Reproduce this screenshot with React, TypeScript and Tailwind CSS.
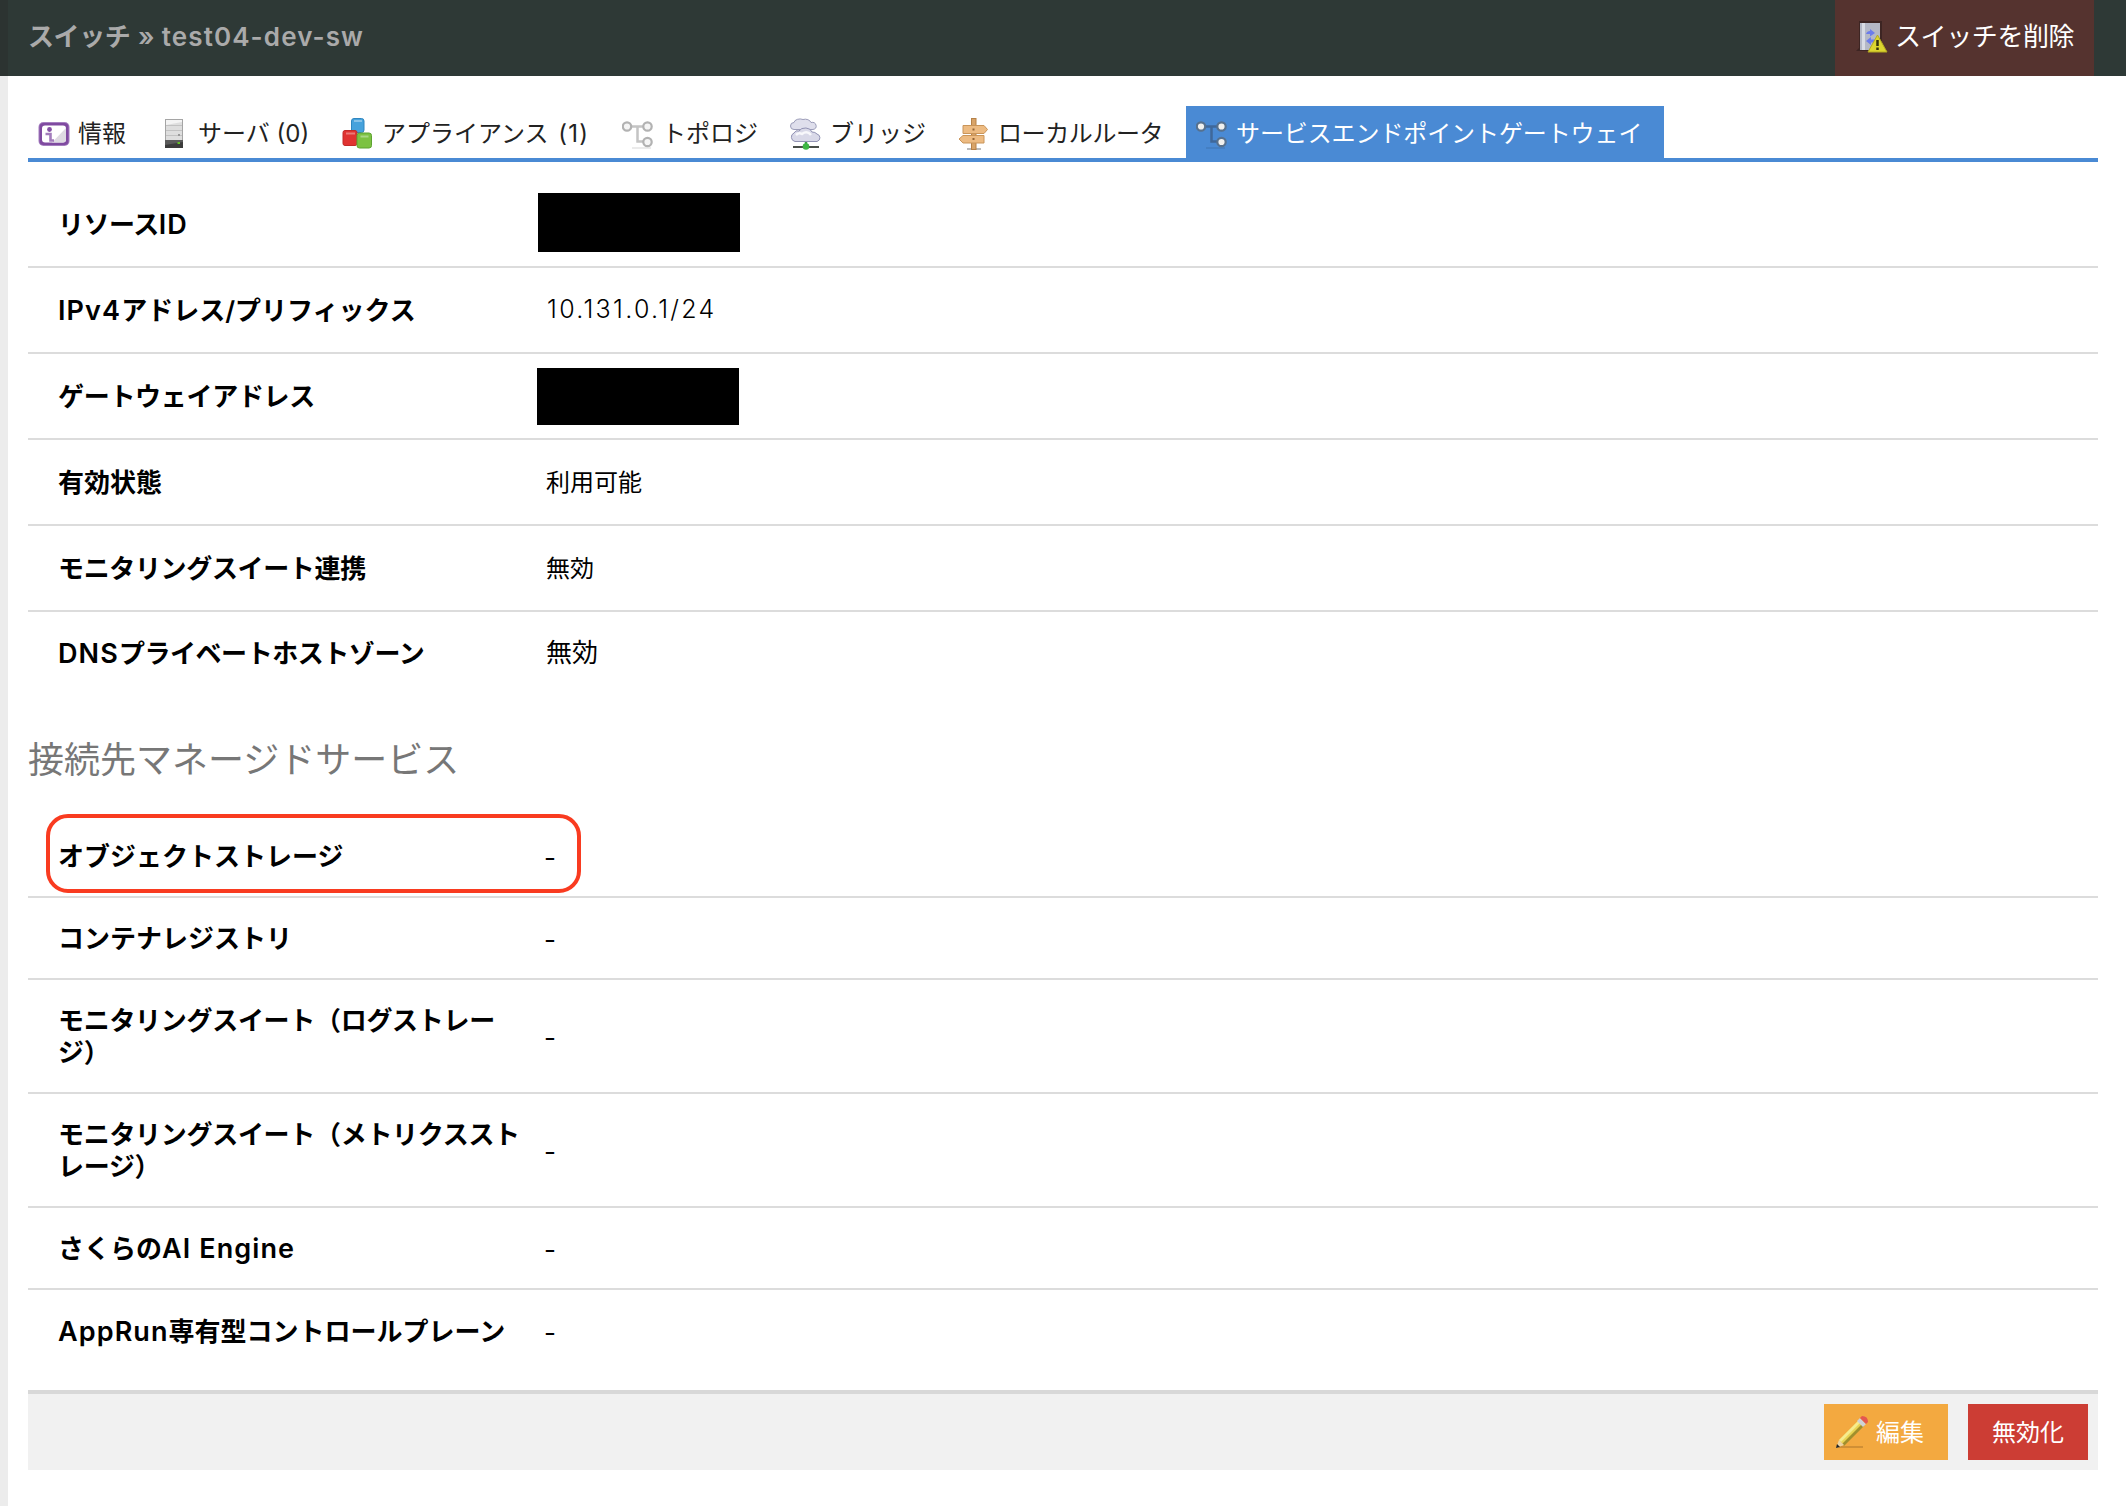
import React from 'react';

interface RowProps {
  label: React.ReactNode;
  children: React.ReactNode;
  className?: string;
  labelClass?: string;
  valueClass?: string;
  last?: boolean;
}

interface TabProps {
  icon: React.ReactNode;
  label: React.ReactNode;
  className: string;
  active?: boolean;
}

const InfoIcon = () => (
  <svg width="32" height="32" viewBox="0 0 32 32">
    <rect x="0.5" y="4" width="31" height="24" rx="5" fill="#a57fc0" />
    <rect x="1.500" y="5" width="29" height="22" rx="4" fill="#7f4aa0" />
    <rect x="4" y="7.500" width="24" height="17" rx="3" fill="#fff" />
    <path d="M28 10v11q0 3.500-3 3.500H14z" fill="#dedae2" />
    <circle cx="11.500" cy="11.500" r="2.400" fill="#8450a5" />
    <path d="M7.500 16h5v6.500h3.500" fill="none" stroke="#8450a5" strokeOpacity=".75" strokeWidth="2.600" />
  </svg>
);

const ServerIcon = () => (
  <svg width="32" height="32" viewBox="0 0 32 32">
    <rect x="7.500" y="1.500" width="17" height="28" fill="#dedede" stroke="#a5a5a5" />
    <path d="M8 2h16v2L8 7z" fill="#f4f4f4" />
    <path d="M8 7.500h16M8 12.500h16M8 17.500h16" stroke="#c2c2c2" strokeWidth="1" />
    <rect x="20" y="16" width="2" height="2" fill="#999" />
    <rect x="7" y="22" width="18" height="8" fill="#3c3c3c" />
    <path d="M7 22h18v2L7 27z" fill="#5a5a5a" />
    <rect x="19.500" y="24" width="2.500" height="2" fill="#62bf26" />
  </svg>
);

const ApplianceIcon = () => (
  <svg width="32" height="32" viewBox="0 0 32 32">
    <rect x="9.500" y="0.500" width="12.500" height="14" rx="2.500" fill="#46a2dc" stroke="#2f86c0" />
    <rect x="1" y="12.500" width="14" height="15" rx="2" fill="#e03331" stroke="#c22a28" />
    <rect x="15" y="15" width="14.500" height="15" rx="2.500" fill="#7cc242" stroke="#5da331" />
    <path d="M12 3h8M4 15.500h9M18.500 18.500h8" stroke="#fff" strokeOpacity=".35" strokeWidth="2" />
  </svg>
);

const TopologyIcon = ({ active = false }: { active?: boolean }) => (
  <svg width="32" height="32" viewBox="0 0 32 32">
    <path d="M10 30h19" stroke="#000" strokeOpacity=".08" strokeWidth="2" />
    <path d="M5 8.500h21M15.500 9v14.500H25" fill="none" stroke={active ? '#3f689a' : '#c4c4c4'} strokeWidth="2.500" />
    <g fill={active ? '#f0f0ee' : '#f5f5f5'} stroke={active ? '#56718f' : '#b2b2b2'} strokeWidth="2.200">
      <circle cx="5" cy="8.500" r="4.200" />
      <circle cx="25.500" cy="8.500" r="4.200" />
      <circle cx="25.500" cy="24" r="4.200" />
    </g>
  </svg>
);

const BridgeIcon = () => (
  <svg width="32" height="32" viewBox="0 0 32 32">
    <path d="M3 29h26" stroke="#4a4f4a" strokeWidth="2" />
    <path d="M16 22v7" stroke="#3a9d45" strokeWidth="2.500" />
    <path d="M4 11.500a3.500 3.500 0 0 1 0-7 6 4 0 0 1 9-3 6 4.500 0 0 1 8 3 4 3.500 0 0 1 2 7z" fill="#dfdfec" stroke="#9c9db9" />
    <path d="M5 23.500a4.500 4.500 0 0 1-1-8.500 4 4 0 0 1 5-2 7 5.500 0 0 1 13 1 6 5 0 0 1 5 2 4.500 4 0 0 1 0 7.500z" fill="#d9d9e8" stroke="#9293b4" />
    <path d="M6 17q3-3 6-1 5-4 9 1" fill="none" stroke="#fff" strokeOpacity=".8" strokeWidth="2.500" />
    <circle cx="16" cy="28.500" r="3.300" fill="#3db744" />
  </svg>
);

const SignIcon = () => (
  <svg width="32" height="32" viewBox="0 0 32 32">
    <path d="M9 31h14" stroke="#bbb" strokeWidth="2" />
    <rect x="13.500" y="0.500" width="4.500" height="31" fill="#d9a468" stroke="#b58149" />
    <path d="M5 7.500h21l3.500 4-3.500 4H5z" fill="#edbb82" stroke="#c9955a" />
    <path d="M26 17.500H5L1 21l4 4h21z" fill="#edbb82" stroke="#c9955a" />
    <path d="M14.500 11.500h2M14.500 21h2" stroke="#946536" strokeWidth="2" />
  </svg>
);

const DeleteIcon = () => (
  <svg width="32" height="32" viewBox="0 0 32 32">
    <path d="M3 0h23v30H0l3-3z" fill="#3d2523" />
    <rect x="4" y="2" width="20" height="27" fill="#b4b8c6" />
    <rect x="6" y="2" width="3" height="27" fill="#d9dce4" />
    <path d="M10 13q1-3 4-3V8l5 4-5 3.500V13zM19 18.500h-4V16l-5 4 5 4v-2.500h4z" fill="#6b7cec" />
    <path d="M21.500 14 31 31H12z" fill="#dcd52f" stroke="#b3a921" />
    <path d="M21.500 19v6M21.500 26.500v2.500" stroke="#35320c" strokeWidth="2.500" />
  </svg>
);

const PencilIcon = () => (
  <svg width="32" height="32" viewBox="0 0 32 32">
    <path d="M3 31h24" stroke="#b97f2f" strokeOpacity=".6" strokeWidth="2" />
    <path d="M3 24 23 4l5 5L8 29z" fill="#e9d453" />
    <path d="m3 24 20-20 2 2L5 26z" fill="#f6ec8e" />
    <path d="m6 28 20-20 2 2L8 30z" fill="#a08f2d" />
    <path d="m21 5 3-3 6 6-3 3z" fill="#cfd2d6" />
    <path d="m24 2 2-2q6 0 6 6l-2 2z" fill="#e4574f" />
    <path d="m3 24 5 5-8 3z" fill="#ecd4a2" />
    <path d="m1 28 3 3-4 1z" fill="#222" />
  </svg>
);

const Tab: React.FC<TabProps> = ({ icon, label, className, active = false }) => (
  <div
    className={`flex h-[52px] shrink-0 items-center pt-1 pl-[10px] text-2xl whitespace-nowrap ${className} ${
      active ? 'bg-[#4a8ad4] text-white' : 'text-[#222]'
    }`}
  >
    {icon}
    <span className="ml-2">{label}</span>
  </div>
);

const Row: React.FC<RowProps> = ({
  label,
  children,
  className = '',
  labelClass = '',
  valueClass = 'text-2xl',
  last = false,
}) => (
  <div className={`flex items-center border-[#dcdcdc] pl-[30px] ${last ? '' : 'border-b-2'} ${className}`}>
    <div className={`w-[487px] shrink-0 pt-0.5 text-[26px] leading-8 font-semibold whitespace-nowrap ${labelClass}`}>
      {label}
    </div>
    <div className={valueClass}>{children}</div>
  </div>
);

// Latin parts of a label run a little wider than the kana around them
const Latin: React.FC<{ children: React.ReactNode }> = ({ children }) => (
  <span className="text-[27px] tracking-[1.1px]">{children}</span>
);

const Dash = () => <span className="-ml-px block h-8 pt-0.5 text-[26px] leading-8">-</span>;

const App: React.FC = () => {
  return (
    <div
      lang="ja"
      className="flex h-[1506px] w-[2126px] flex-col overflow-hidden bg-white font-['Inter','Noto_Sans_CJK_JP',sans-serif] text-black"
    >
      {/* Header */}
      <header className="flex h-[76px] shrink-0 items-center justify-between border-l-8 border-[#2c3331] bg-[#2e3936] pr-8 pl-5">
        <h1 className="pb-1 text-[26px] font-semibold whitespace-nowrap text-[#aaa]">
          <span className="tracking-[-0.4px] [word-spacing:1.500px]">スイッチ » </span>
          <span className="tracking-[1.1px]">test04-dev-sw</span>
        </h1>
        <button className="flex h-[76px] w-[259px] items-center gap-[7px] bg-[#55332f] pb-[3px] pl-[21px] text-[26px] tracking-[-0.4px] whitespace-nowrap text-white">
          <DeleteIcon />
          <span>スイッチを削除</span>
        </button>
      </header>

      <main className="flex grow flex-col border-l-8 border-[#ececec] pr-7 pl-5">
        {/* Tabs */}
        <nav className="mt-[30px] flex h-14 shrink-0 border-b-4 border-[#4a8ad4]">
          <Tab icon={<InfoIcon />} label="情報" className="w-[120px]" />
          <Tab icon={<ServerIcon />} label="サーバ (0)" className="w-[184px]" />
          <Tab
            icon={<ApplianceIcon />}
            label={<>アプライアンス <span className="ml-[3px] tracking-[1.2px]">(1)</span></>}
            className="w-[280px]"
          />
          <Tab icon={<TopologyIcon />} label="トポロジ" className="w-[168px]" />
          <Tab icon={<BridgeIcon />} label="ブリッジ" className="w-[168px]" />
          <Tab icon={<SignIcon />} label="ローカルルータ" className="w-[238px] tracking-[-0.4px]" />
          <Tab
            icon={<TopologyIcon active />}
            label="サービスエンドポイントゲートウェイ"
            className="w-[478px] tracking-[-0.1px]"
            active
          />
        </nav>

        {/* Gateway details */}
        <section className="flex shrink-0 flex-col">
          <Row label={<>リソース<Latin>ID</Latin></>} className="h-[106px] pt-5" labelClass="tracking-[-0.5px]">
            <div className="mb-[3px] -ml-[7px] h-[59px] w-[202px] bg-black" />
          </Row>
          <Row
            label={<><Latin>IPv4</Latin>アドレス/プリフィックス</>}
            className="h-[86px]"
            valueClass="pl-0.5 text-[25px] font-light tracking-[2.3px]"
          >
            10.131.0.1/24
          </Row>
          <Row label="ゲートウェイアドレス" className="h-[86px]" labelClass="tracking-[-0.3px]">
            <div className="-ml-2 h-[57px] w-[202px] bg-black" />
          </Row>
          <Row label="有効状態" className="h-[86px]" valueClass="pt-0.5 pl-px text-2xl">
            利用可能
          </Row>
          <Row
            label="モニタリングスイート連携"
            className="h-[86px]"
            labelClass="tracking-[-0.35px]"
            valueClass="pt-0.5 pl-px text-2xl"
          >
            無効
          </Row>
          <Row
            label={<><Latin>DNS</Latin>プライベートホストゾーン</>}
            className="h-[84px] pb-[3px]"
            labelClass="tracking-[-0.45px]"
            valueClass="pl-px text-[26px]"
            last
          >
            無効
          </Row>
        </section>

        {/* Managed services */}
        <h2 className="mt-[37px] h-[54px] shrink-0 text-4xl leading-[54px] text-[#777]">接続先マネージドサービス</h2>
        <section className="mt-[27px] flex shrink-0 flex-col">
          <div className="relative">
            <Row label="オブジェクトストレージ" className="h-[84px] pt-0.5">
              <Dash />
            </Row>
            <div className="absolute top-0 left-[18px] h-[79px] w-[535px] rounded-[22px] border-4 border-[#f93b20]" />
          </div>
          <Row label="コンテナレジストリ" className="h-[82px]">
            <Dash />
          </Row>
          <Row
            label={<>モニタリングスイート（ログストレー<br />ジ）</>}
            className="h-[114px]"
            labelClass="tracking-[-0.3px]"
          >
            <Dash />
          </Row>
          <Row
            label={<>モニタリングスイート（メトリクススト<br />レージ）</>}
            className="h-[114px]"
            labelClass="tracking-[-0.3px]"
          >
            <Dash />
          </Row>
          <Row label={<>さくらの<Latin>AI Engine</Latin></>} className="h-[82px]">
            <Dash />
          </Row>
          <Row label={<><Latin>AppRun</Latin>専有型コントロールプレーン</>} className="h-[82px]" last>
            <Dash />
          </Row>
        </section>

        {/* Actions */}
        <footer className="mt-[18px] flex h-20 shrink-0 items-center justify-end gap-5 border-t-4 border-[#d8d8d8] bg-[#f1f1f1] pr-[10px]">
          <button className="flex h-14 w-[124px] items-center gap-2 bg-[#f3a940] pl-3 text-2xl whitespace-nowrap text-white">
            <PencilIcon />
            <span className="pt-px">編集</span>
          </button>
          <button className="h-14 w-[120px] bg-[#cc3d34] pt-px text-2xl whitespace-nowrap text-white">無効化</button>
        </footer>
      </main>
    </div>
  );
};

export default App;
